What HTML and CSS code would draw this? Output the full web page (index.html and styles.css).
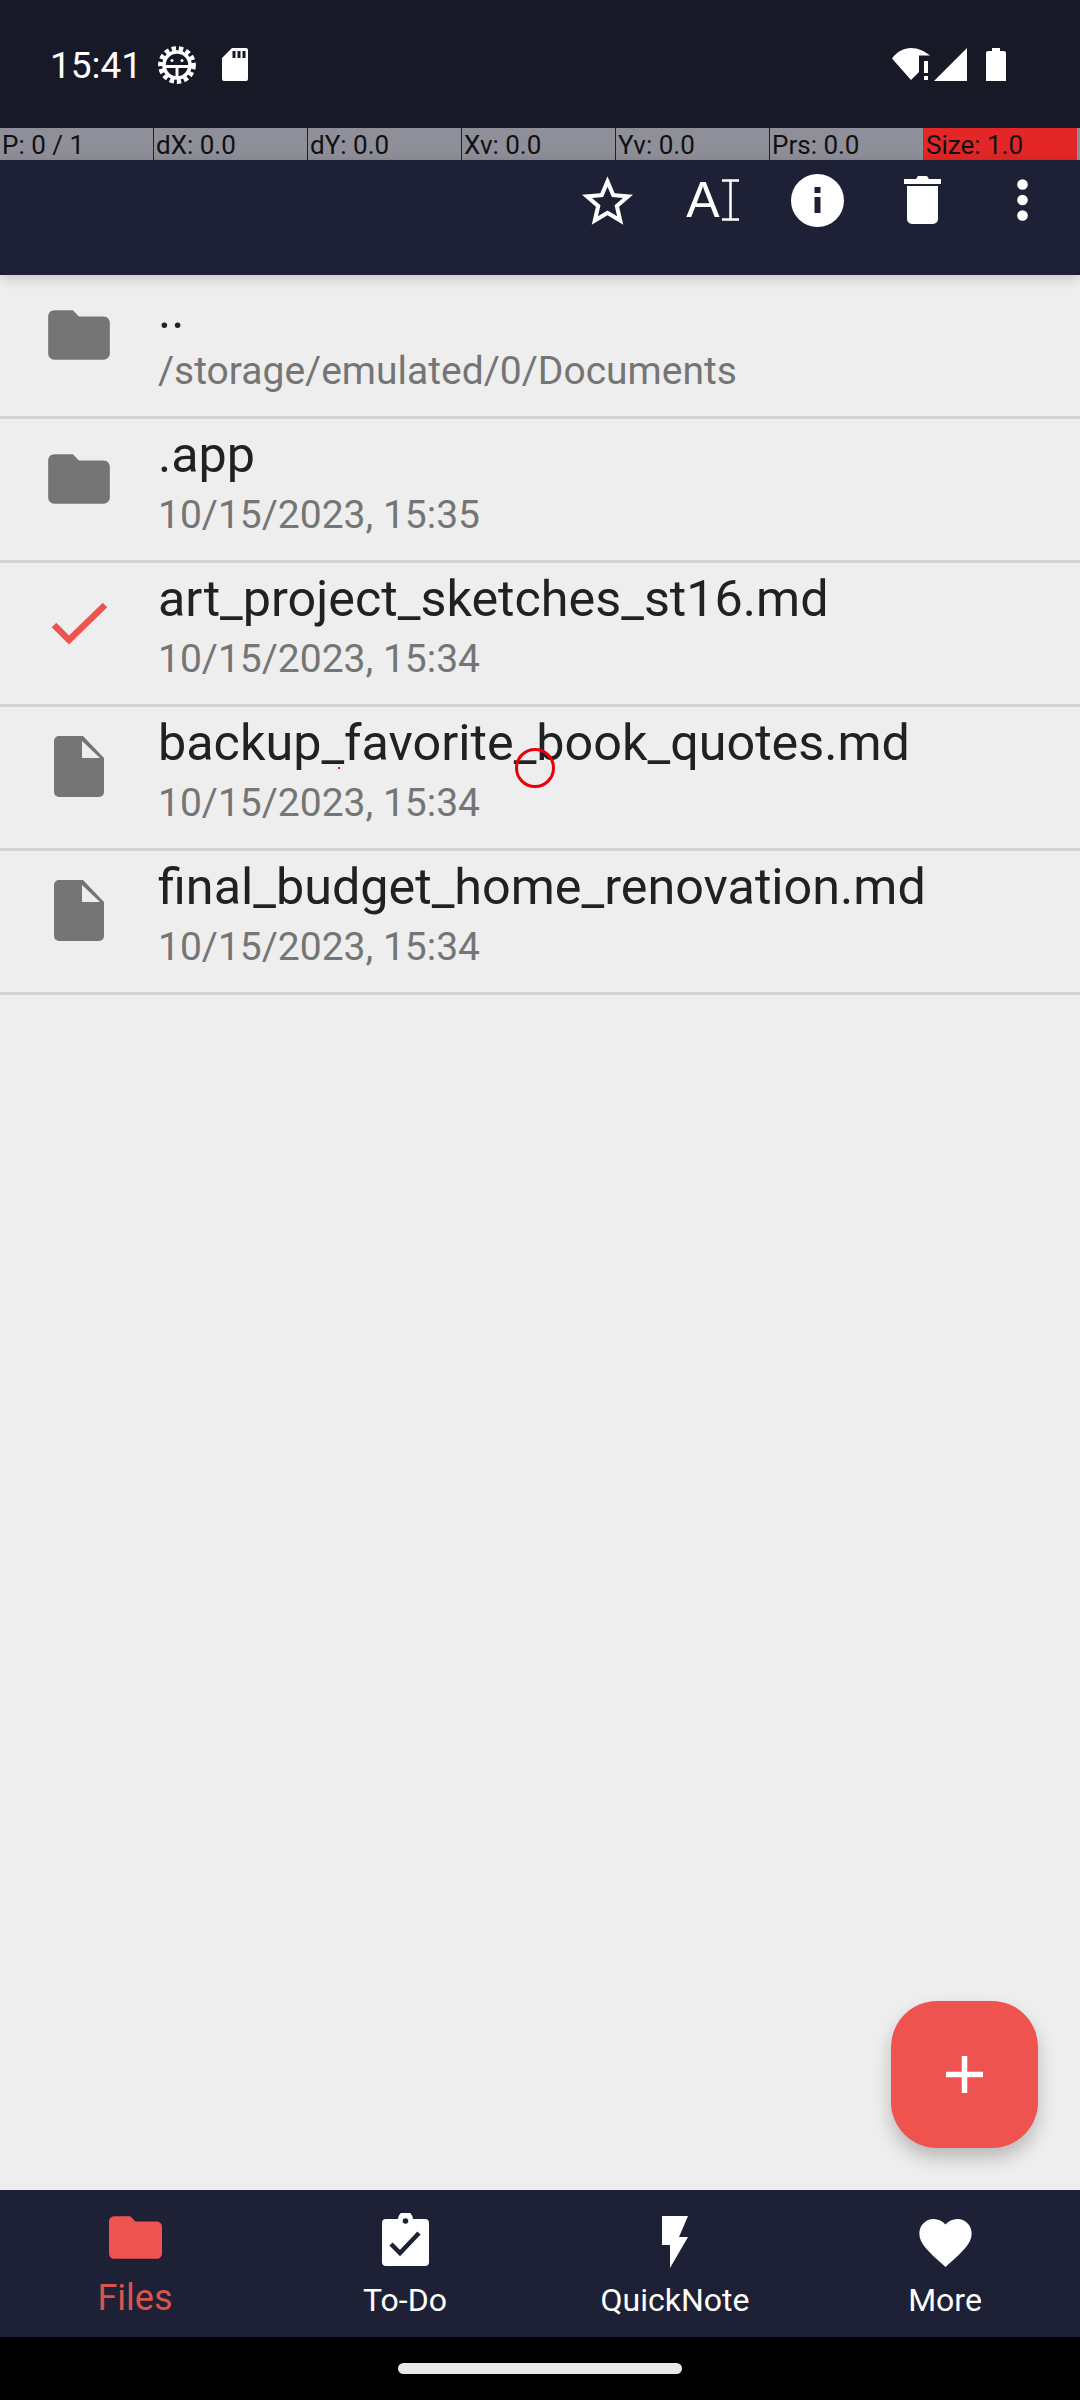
FILE: index.html
```html
<!DOCTYPE html>
<html lang="en">
<head>
<meta charset="utf-8">
<title>Files</title>
<link rel="stylesheet" href="styles.css">
</head>
<body>
<div class="screen">
  <header class="status">
    <span class="time">15:41</span>
    <svg class="st-gear" viewBox="0 0 38 38"><circle cx="19" cy="19" r="16.4" fill="none" stroke="#fff" stroke-width="5" stroke-dasharray="4.300 2.850"/><circle cx="19" cy="19" r="13" fill="none" stroke="#fff" stroke-width="3.600"/><path d="M6 20.500h26M19 20.500v12" stroke="#fff" stroke-width="3" fill="none"/><circle cx="14" cy="14.500" r="1.500" fill="#fff"/><circle cx="24" cy="14.500" r="1.500" fill="#fff"/></svg>
    <svg class="st-sd" viewBox="0 0 26 33"><path fill="#fff" d="M10 0h14a2 2 0 0 1 2 2v29a2 2 0 0 1-2 2H2a2 2 0 0 1-2-2V10z"/><path fill="#171927" d="M10.500 3h3v7h-3zM15.500 3h3v7h-3zM20.500 3h3v7h-3z"/></svg>
    <span class="status-gap"></span>
    <svg class="st-wifi" viewBox="0 0 38 33"><path fill="#fff" d="M0 10.500C5 3.500 12 0 19 0c7 0 14 3.500 19 7.500L33 7.500h-6V24l-8 8z"/><path fill="#fff" d="M32 13h4v12h-4zM32 28h4v4h-4z"/></svg>
    <svg class="st-signal" viewBox="0 0 33 33"><path fill="#fff" d="M0 33 33 0v33z"/></svg>
    <svg class="st-batt" viewBox="0 0 20 33"><path fill="#fff" d="M6 0h8v3h4a2 2 0 0 1 2 2v28H0V5a2 2 0 0 1 2-2h4z"/></svg>
  </header>

  <div class="ptr">
    <div class="ptr-cell">P: 0 / 1</div>
    <div class="ptr-cell">dX: 0.0</div>
    <div class="ptr-cell">dY: 0.0</div>
    <div class="ptr-cell">Xv: 0.0</div>
    <div class="ptr-cell">Yv: 0.0</div>
    <div class="ptr-cell ptr-prs">Prs: 0.0</div>
    <div class="ptr-cell ptr-size">Size: 1.0</div>
    <div class="ptr-end"></div>
  </div>

  <div class="appbar">
    <button class="tb"><svg class="tb-star" viewBox="2 2 20 19"><path fill="#fff" d="M22 9.240l-7.190-.62L12 2 9.190 8.630 2 9.240l5.460 4.730L5.820 21 12 17.270 18.180 21l-1.630-7.030L22 9.240zM12 15.400l-3.760 2.270 1-4.280-3.320-2.880 4.380-.38L12 6.100l1.710 4.040 4.380.38-3.320 2.880 1 4.280L12 15.400z"/></svg></button>
    <button class="tb"><span class="tb-a">A</span><svg class="tb-beam" viewBox="0 0 17 42"><path d="M0 1.500h17M0 40.500h17M8.500 1.500v39" stroke="#fff" stroke-width="2.500" fill="none"/></svg></button>
    <button class="tb"><svg class="tb-info" viewBox="0 0 53 53"><circle cx="26.500" cy="26.500" r="26.500" fill="#fff"/><path fill="#1e2136" d="M23.500 13h6v6h-6zM23.500 23h6v16h-6z"/></svg></button>
    <button class="tb"><svg class="tb-trash" viewBox="0 0 37 48"><path fill="#fff" d="M12 3l2-3h9l2 3h12v5H0V3zM3 10h31v33a5 5 0 0 1-5 5H8a5 5 0 0 1-5-5z"/></svg></button>
    <button class="tb tb-last"><svg class="tb-dots" viewBox="0 0 11 42"><circle cx="5.500" cy="5.500" r="5.300" fill="#fff"/><circle cx="5.500" cy="21" r="5.300" fill="#fff"/><circle cx="5.500" cy="36.500" r="5.300" fill="#fff"/></svg></button>
  </div>

  <main class="list">
    <div class="row">
      <svg class="ic" viewBox="0 0 24 24"><path class="ic-folder" d="M10 4H4c-1.100 0-2 .9-2 2v12c0 1.100.9 2 2 2h16c1.100 0 2-.9 2-2V8c0-1.100-.9-2-2-2h-8l-2-2z"/></svg>
      <div class="txt"><div class="name">..</div><div class="sub">/storage/emulated/0/Documents</div></div>
    </div>
    <div class="row">
      <svg class="ic" viewBox="0 0 24 24"><path class="ic-folder" d="M10 4H4c-1.100 0-2 .9-2 2v12c0 1.100.9 2 2 2h16c1.100 0 2-.9 2-2V8c0-1.100-.9-2-2-2h-8l-2-2z"/></svg>
      <div class="txt"><div class="name">.app</div><div class="sub">10/15/2023, 15:35</div></div>
    </div>
    <div class="row">
      <svg class="ic" viewBox="0 0 74 74"><path class="ic-check" d="M12 39 27 54 63 19"/></svg>
      <div class="txt"><div class="name">art_project_sketches_st16.md</div><div class="sub">10/15/2023, 15:34</div></div>
    </div>
    <div class="row">
      <svg class="ic" viewBox="0 0 74 74"><path class="ic-folder" d="M17 6h24l21 22v34a5 5 0 0 1-5 5H17a5 5 0 0 1-5-5V11a5 5 0 0 1 5-5z"/><path class="ic-fold" d="M40 11v17h18z"/></svg>
      <div class="txt"><div class="name">backup_favorite_book_quotes.md</div><div class="sub">10/15/2023, 15:34</div></div>
    </div>
    <div class="row">
      <svg class="ic" viewBox="0 0 74 74"><path class="ic-folder" d="M17 6h24l21 22v34a5 5 0 0 1-5 5H17a5 5 0 0 1-5-5V11a5 5 0 0 1 5-5z"/><path class="ic-fold" d="M40 11v17h18z"/></svg>
      <div class="txt"><div class="name">final_budget_home_renovation.md</div><div class="sub">10/15/2023, 15:34</div></div>
    </div>
  </main>

  <nav class="tabs">
    <div class="tab tab-on"><svg class="t-folder" viewBox="2 4 20 16"><path fill="#ef5350" d="M10 4H4c-1.100 0-2 .9-2 2v12c0 1.100.9 2 2 2h16c1.100 0 2-.9 2-2V8c0-1.100-.9-2-2-2h-8l-2-2z"/></svg><span class="t-label">Files</span></div>
    <div class="tab"><svg class="t-clip" viewBox="0 0 47 53"><path fill="#fff" d="M4 6h12a7.500 7.500 0 0 1 15 0h12a4 4 0 0 1 4 4v39a4 4 0 0 1-4 4H4a4 4 0 0 1-4-4V10a4 4 0 0 1 4-4z"/><circle cx="23.500" cy="8" r="2.800" fill="#1e2136"/><path d="M9 31l9 9 19-20" stroke="#1e2136" stroke-width="4.500" fill="none"/></svg><span class="t-label">To-Do</span></div>
    <div class="tab"><svg class="t-bolt" viewBox="0 0 26 52"><path fill="#fff" d="M0 0h26l-9 21h9L8 52V29H0z"/></svg><span class="t-label">QuickNote</span></div>
    <div class="tab"><svg class="t-heart" viewBox="2 3 20 18.350"><path fill="#fff" d="M12 21.350l-1.450-1.320C5.400 15.360 2 12.280 2 8.500 2 5.420 4.420 3 7.500 3c1.740 0 3.410.81 4.500 2.090C13.090 3.810 14.760 3 16.500 3 19.580 3 22 5.420 22 8.500c0 3.780-3.400 6.860-8.550 11.540L12 21.350z"/></svg><span class="t-label">More</span></div>
  </nav>

  <footer class="navbar"><div class="pill"></div></footer>

  <button class="fab"><svg class="fab-plus" viewBox="0 0 37 37"><path d="M18.500 0v37M0 18.500h37" stroke="#fff" stroke-width="5.500"/></svg></button>
  <div class="touch"></div>
  <div class="touch-dot"></div>
</div>
</body>
</html>
```

FILE: styles.css
```css
* { box-sizing: border-box; }
html, body { margin: 0; padding: 0; }
body { font-family: Roboto, sans-serif; background: #eeeeee; }
svg { display: block; flex: none; }

.screen { position: relative; width: 1080px; height: 2400px; display: flex; flex-direction: column; overflow: hidden; }

.status { height: 128px; background: #171927; display: flex; align-items: center; padding-left: 50px; color: #fff; }
.time { font-size: 37px; line-height: 128px; width: 108px; position: relative; top: 2px; }
.st-gear { width: 38px; height: 38px; margin-top: 1px; }
.st-sd { width: 26px; height: 33px; margin-left: 26px; }
.status-gap { flex: 1; }
.st-wifi { width: 38px; height: 33px; }
.st-signal { width: 33px; height: 33px; margin-left: 4px; }
.st-batt { width: 20px; height: 33px; margin-left: 19px; margin-right: 74px; }

.ptr { height: 32px; display: flex; background: #8f8f99; }
.ptr-cell { width: 154px; height: 32px; border-right: 1px solid #20212c; font-size: 26px; line-height: 34px; color: #111; padding-left: 2px; white-space: nowrap; }
.ptr-prs { border-right-color: #c02a30; }
.ptr-size { background: #e32626; border-right: 0; width: 153px; }
.ptr-end { flex: 1; }

.appbar { height: 115px; background: #1e2136; display: flex; justify-content: flex-end; padding-right: 9px; position: relative; z-index: 1; box-shadow: 0 3px 12px rgba(0,0,0,.18); }
.tb { width: 105px; height: 80px; background: none; border: 0; padding: 0; display: flex; align-items: center; justify-content: center; }
.tb-last { width: 96px; padding-right: 2px; }
.tb-star { width: 51px; height: 49px; }
.tb-a { font-family: "Liberation Sans", sans-serif; font-size: 50px; line-height: 42px; color: #fff; }
.tb-beam { width: 17px; height: 42px; margin-left: 2px; }
.tb-info { width: 53px; height: 53px; }
.tb-trash { width: 37px; height: 48px; }
.tb-dots { width: 11px; height: 42px; }

.list { flex: 1; display: flex; flex-direction: column; background: #eeeeee; }
.row { height: 144px; flex: none; border-bottom: 3px solid #d3d3d3; display: flex; align-items: flex-start; padding-left: 42px; padding-top: 23px; }
.ic { width: 74px; height: 74px; }
.ic-folder { fill: #757575; }
.ic-fold { fill: #eeeeee; }
.ic-check { fill: none; stroke: #ef5350; stroke-width: 6.500; }
.txt { margin-left: 42px; margin-top: -19px; }
.name { font-size: 50.300px; line-height: 64px; color: #212121; white-space: nowrap; }
.sub { font-size: 39px; line-height: 54px; color: #757575; white-space: nowrap; margin-top: 1px; }

.tabs { height: 147px; background: #1e2136; display: flex; flex: none; }
.tab { flex: 1; display: flex; flex-direction: column; align-items: center; position: relative; color: #fff; }
.tab-on { color: #d9534f; }
.t-folder { width: 53px; height: 43px; margin-top: 26px; }
.t-clip { width: 47px; height: 53px; margin-top: 23px; }
.t-bolt { width: 26px; height: 52px; margin-top: 26px; }
.t-heart { width: 53px; height: 48px; margin-top: 29px; }
.t-label { position: absolute; top: 90px; font-size: 32px; line-height: 40px; }
.tab-on .t-label { font-size: 36px; top: 88px; }

.navbar { height: 63px; background: #000; flex: none; display: flex; justify-content: center; padding-top: 26px; }
.pill { width: 284px; height: 11px; border-radius: 6px; background: #e8e8e8; }

.fab { position: absolute; left: 891px; top: 2001px; width: 147px; height: 147px; border: 0; padding: 0; border-radius: 46px; background: #ef5350; display: flex; align-items: center; justify-content: center; box-shadow: 0 10px 18px rgba(0,0,0,.22); }
.fab-plus { width: 37px; height: 37px; }

.touch { position: absolute; left: 515px; top: 748px; width: 40px; height: 40px; border: 3px solid #e8000c; border-radius: 50%; }
.touch-dot { position: absolute; left: 338px; top: 767px; width: 2px; height: 2px; background: #d0202a; }
```
